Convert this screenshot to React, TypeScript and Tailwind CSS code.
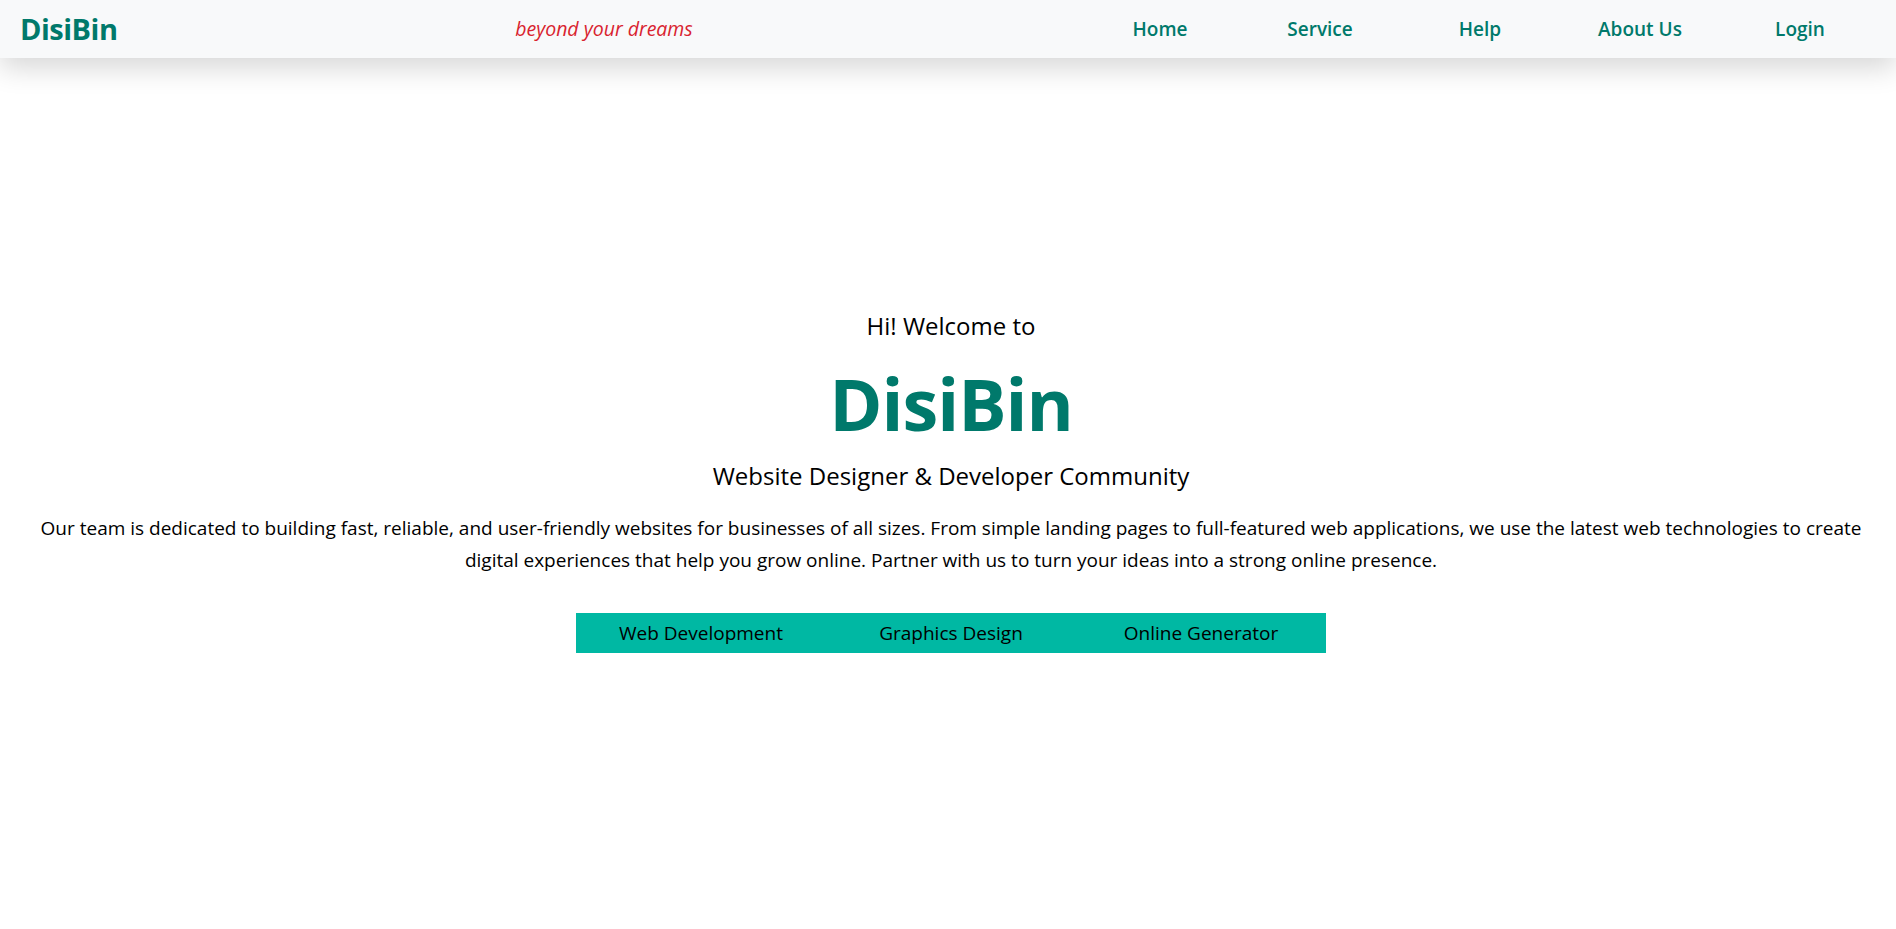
import React from "react";

const navItems = ["Home", "Service", "Help", "About Us", "Login"];
const services = ["Web Development", "Graphics Design", "Online Generator"];

export default function App() {
  return (
    <div className="min-h-screen bg-white text-black" style={{ fontFamily: '"Open Sans", "Noto Sans", sans-serif' }}>
      <header className="relative z-10 flex h-[58px] items-center bg-[#f8f9fa] shadow-[0_10px_28px_rgba(0,0,0,0.16)]">
        <div className="w-[430px] pl-5">
          <span className="text-[29px] font-bold tracking-[-0.5px] text-[#00796b]">DisiBin</span>
        </div>
        <div className="w-[348px] text-center">
          <span className="text-[19.5px] italic text-[#d9232f]">beyond your dreams</span>
        </div>
        <div className="flex-1" />
        <nav className="flex pr-4">
          {navItems.map((item) => (
            <a key={item} href="#" className="w-[160px] text-center text-[19px] font-semibold text-[#00796b]">
              {item}
            </a>
          ))}
        </nav>
      </header>
      <main className="flex flex-col items-center pl-[39px] pr-[33px] pt-[252px] text-center">
        <p className="text-[24px] leading-[32px]">Hi! Welcome to</p>
        <h1 className="mt-[16px] text-[72px] font-bold leading-[90px] tracking-[-1px] text-[#00796b]">DisiBin</h1>
        <p className="mt-[12px] text-[24px] leading-[32px]">Website Designer &amp; Developer Community</p>
        <p className="mt-[20px] text-[19px] leading-[32px]">
          Our team is dedicated to building fast, reliable, and user-friendly websites for businesses of all sizes. From simple landing pages to full-featured web applications, we use the latest web technologies to create
          <br />
          digital experiences that help you grow online. Partner with us to turn your ideas into a strong online presence.
        </p>
        <div className="mt-[37px] flex h-[40px] w-[750px] items-center bg-[#00b8a3]">
          {services.map((s) => (
            <div key={s} className="w-[250px] text-center text-[19px]">
              {s}
            </div>
          ))}
        </div>
      </main>
    </div>
  );
}
